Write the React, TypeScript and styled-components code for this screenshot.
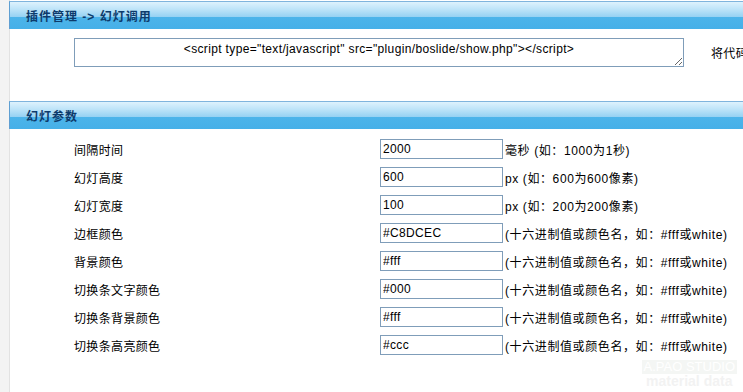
import * as React from "react";
import styled, { createGlobalStyle } from "styled-components";

const GlobalStyle = createGlobalStyle`
  html, body {
    margin: 0;
    padding: 0;
    background: #f3f3f3;
    overflow: hidden;
  }
  body {
    font: 12px "Liberation Sans", "Noto Sans CJK SC", sans-serif;
    letter-spacing: 0.35px;
    color: #000;
  }
`;

const Page = styled.div`
  position: relative;
  margin-left: 9px;
  padding-top: 1px;
  min-height: 391px;
  background: #fff;
  border-left: 1px solid #e2e2e2;
`;

const Header = styled.div`
  height: 27px;
  border-top: 1px solid #7fb4dd;
  border-left: 1px solid #5f9fd2;
  margin-left: -1px;
  background: linear-gradient(
    to bottom,
    #def2fd 0%,
    #b9e2f8 30%,
    #97d2f3 54%,
    #4cb4ea 56%,
    #46b0e8 100%
  );
  display: flex;
  align-items: center;
  padding-left: 16px;
  font-weight: bold;
  font-size: 12px;
  letter-spacing: 1px;
  color: #0d3b6c;
  white-space: nowrap;
`;

const CodeRow = styled.div`
  display: flex;
  align-items: center;
  padding: 9px 0 0 64px;
  white-space: nowrap;
`;

const CodeBox = styled.textarea`
  box-sizing: border-box;
  width: 610px;
  height: 29px;
  flex: none;
  border: 1px solid #7f9db9;
  padding: 3px 2px;
  margin: 0;
  font: 12px "Liberation Sans", "Noto Sans CJK SC", sans-serif;
  letter-spacing: 0.35px;
  text-align: center;
  resize: both;
  overflow: hidden;
  color: #000;
`;

const Hint = styled.span`
  margin-left: 27px;
`;

const Params = styled.div`
  margin-top: 34px;
`;

const Rows = styled.div`
  padding-top: 6px;
  display: flex;
  flex-direction: column;
`;

const Row = styled.div`
  height: 28px;
  display: flex;
  align-items: center;
  padding-left: 64px;
  white-space: nowrap;
`;

const Label = styled.span`
  width: 306px;
  flex: none;
`;

const Field = styled.input`
  box-sizing: border-box;
  width: 123px;
  height: 20px;
  flex: none;
  margin: 0;
  padding: 0 2px;
  border: 1px solid #7f9db9;
  font: 12px "Liberation Sans", "Noto Sans CJK SC", sans-serif;
  letter-spacing: 0.35px;
  color: #000;
  outline: none;
`;

const Note = styled.span`
  margin-left: 2px;
  letter-spacing: 0.6px;
`;

const Watermark = styled.div`
  position: absolute;
  right: 6px;
  bottom: 4px;
  display: flex;
  flex-direction: column;
  align-items: center;
  font: bold 13px "Liberation Sans", sans-serif;
  letter-spacing: 0;
  line-height: 14px;
  pointer-events: none;
`;

const Studio = styled.span`
  background: #f4f6f4;
  color: #fff;
  font-weight: normal;
  padding: 0 2px;
`;

const Material = styled.span`
  color: #f2f2f2;
  font-size: 14px;
`;

const colorNote = "(十六进制值或颜色名，如：#fff或white)";

const PARAMS = [
  { label: "间隔时间", value: "2000", note: "毫秒 (如：1000为1秒)" },
  { label: "幻灯高度", value: "600", note: "px (如：600为600像素)" },
  { label: "幻灯宽度", value: "100", note: "px (如：200为200像素)" },
  { label: "边框颜色", value: "#C8DCEC", note: colorNote },
  { label: "背景颜色", value: "#fff", note: colorNote },
  { label: "切换条文字颜色", value: "#000", note: colorNote },
  { label: "切换条背景颜色", value: "#fff", note: colorNote },
  { label: "切换条高亮颜色", value: "#ccc", note: colorNote },
];

export default function App() {
  return (
    <>
      <GlobalStyle />
      <Page>
        <Header>插件管理 -&gt; 幻灯调用</Header>
        <CodeRow>
          <CodeBox
            readOnly
            defaultValue={'<script type="text/javascript" src="plugin/boslide/show.php"></script>'}
          />
          <Hint>将代码</Hint>
        </CodeRow>

        <Params>
          <Header>幻灯参数</Header>
          <Rows>
            {PARAMS.map(p => (
              <Row key={p.label}>
                <Label>{p.label}</Label>
                <Field defaultValue={p.value} />
                <Note>{p.note}</Note>
              </Row>
            ))}
          </Rows>
        </Params>

        <Watermark>
          <Studio>A.PAO STUDIO</Studio>
          <Material>material data</Material>
        </Watermark>
      </Page>
    </>
  );
}
